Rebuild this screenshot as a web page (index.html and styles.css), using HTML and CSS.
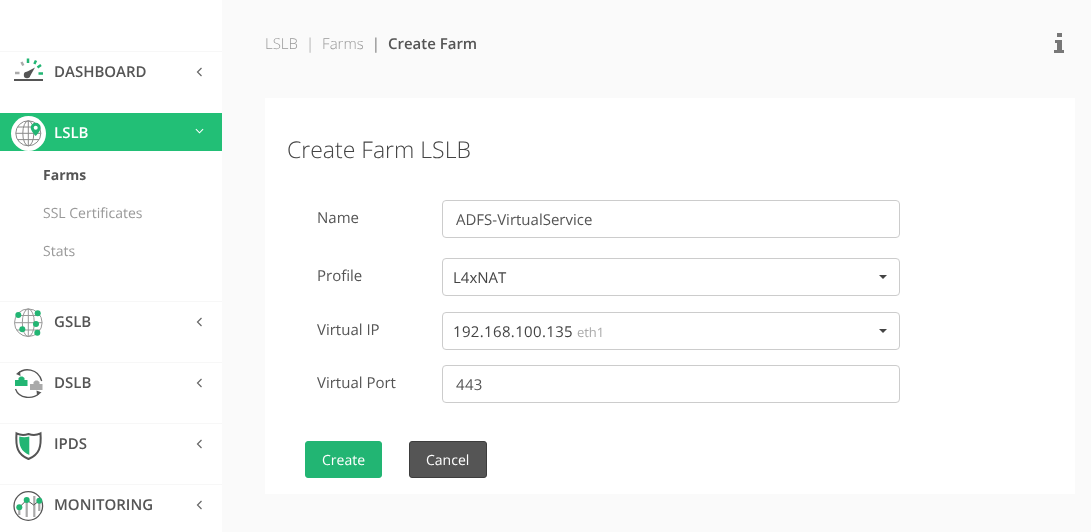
FILE: index.html
```html
<!doctype html>
<html lang="en">
<head>
    <meta charset="UTF-8">
    <title>Create Farm LSLB</title>
    <link rel="stylesheet" href="styles.css">
</head>
<body>
<div class="page">
    <div class="sidebar">
        <div class="navItem">
            <svg class="navIcon" viewBox="0 0 33 33">
                <path d="M1 23h29" stroke="#555" stroke-width="2" fill="none"/>
                <path d="M2 16h4.500M8.500 5l1.800 3.500" stroke="#aaa" stroke-width="2.500" fill="none"/>
                <path d="M15 1.500v4.500M23 3.500l-1.600 3.500M28 8l-3.500 2.500M25.500 16.500h4.500" stroke="#22b573" stroke-width="2.500" fill="none"/>
                <path d="M12.500 15.500L22 10.500 16.500 20z" fill="#555"/>
                <circle cx="14" cy="18" r="3.200" fill="#555"/>
            </svg>
            <span class="navText">DASHBOARD</span>
            <svg class="arrow" viewBox="0 0 8 10"><path d="M6 1L2 5l4 4" fill="none" stroke="#666" stroke-width="1.200"/></svg>
        </div>
        <div class="navItem active">
            <span class="iconDisc">
                <svg class="navIcon" viewBox="0 0 29 29">
                    <g fill="none" stroke="#8a8a8a" stroke-width="1">
                        <circle cx="14.300" cy="14.300" r="12.500"/>
                        <ellipse cx="14.300" cy="14.300" rx="5.500" ry="12.500"/>
                        <path d="M1.800 14.300h25M3.500 8h21.600M3.500 20.600h21.600M14.300 1.800v25"/>
                    </g>
                    <path d="M21.700 3.700a5 5 0 0 1 5 5c0 3-5 8.300-5 8.300s-5-5.300-5-8.300a5 5 0 0 1 5-5z" fill="#22b573"/>
                    <circle cx="21.700" cy="8.700" r="2" fill="#fff"/>
                </svg>
            </span>
            <span class="navText">LSLB</span>
            <svg class="arrow" viewBox="0 0 10 8"><path d="M1 2l4 4 4-4" fill="none" stroke="#fff" stroke-width="1.200"/></svg>
        </div>
        <div class="subNav">
            <div class="subItem current">Farms</div>
            <div class="subItem">SSL Certificates</div>
            <div class="subItem">Stats</div>
        </div>
        <div class="navItem">
            <svg class="navIcon" viewBox="0 0 33 33">
                <g fill="none" stroke="#999" stroke-width="1">
                    <circle cx="15.300" cy="15.700" r="13.800"/>
                    <ellipse cx="15.300" cy="15.700" rx="6" ry="13.800"/>
                    <path d="M1.500 15.700h27.600M3.500 8.500h23.600M3.500 23h23.600M15.300 2v27.500"/>
                </g>
                <g fill="#22b573">
                    <circle cx="5.300" cy="8" r="3"/>
                    <circle cx="24.700" cy="6.300" r="3"/>
                    <circle cx="23" cy="17" r="3"/>
                    <circle cx="9.300" cy="22.300" r="3"/>
                    <circle cx="24.300" cy="25.700" r="3"/>
                </g>
            </svg>
            <span class="navText">GSLB</span>
            <svg class="arrow" viewBox="0 0 8 10"><path d="M6 1L2 5l4 4" fill="none" stroke="#666" stroke-width="1.200"/></svg>
        </div>
        <div class="navItem">
            <svg class="navIcon" viewBox="0 0 33 33">
                <path d="M5 5.500C11 -0.500 25 0 28.700 13M26 25.500C20 31.500 6 31 2.500 21" fill="none" stroke="#555" stroke-width="1.300"/>
                <path d="M3 6l4-3 .5 5zM28.500 24.500l-4.500 3-.5-5z" fill="#555"/>
                <path d="M2 18v-6h3.500v-2l2-1.500h2l2 1.500v2h3v6z" fill="#22b573"/>
                <path d="M17 22v-6h3.500v-2l2-1.500h2l2 1.500v2h3v6z" fill="#aaa"/>
            </svg>
            <span class="navText">DSLB</span>
            <svg class="arrow" viewBox="0 0 8 10"><path d="M6 1L2 5l4 4" fill="none" stroke="#666" stroke-width="1.200"/></svg>
        </div>
        <div class="navItem">
            <svg class="navIcon" viewBox="0 0 33 33">
                <path d="M15.500 5c4 1.300 8 1.300 12-.6 1 13.500-1 21-12 25.600C4.500 25.400 2.500 18 3.500 4.400c4 1.900 8 1.900 12 .6z" fill="#fff" stroke="#555" stroke-width="2"/>
                <path d="M6.300 7.500c3 1 7 1 10 0V26C8 22 5.800 17 6.300 7.500z" fill="#22b573"/>
            </svg>
            <span class="navText">IPDS</span>
            <svg class="arrow" viewBox="0 0 8 10"><path d="M6 1L2 5l4 4" fill="none" stroke="#666" stroke-width="1.200"/></svg>
        </div>
        <div class="navItem">
            <svg class="navIcon" viewBox="0 0 33 33">
                <circle cx="15.300" cy="16" r="14.300" fill="none" stroke="#555" stroke-width="1.300"/>
                <path d="M6.300 17v8M13.700 10v17M21.300 6v21M26.300 11v10" stroke="#aaa" stroke-width="2.200" fill="none"/>
                <path d="M6.300 17.300L13.700 10l7 5 5.600-4.300" stroke="#555" stroke-width="1" fill="none"/>
                <g fill="#22b573">
                    <circle cx="6.300" cy="17.300" r="3"/>
                    <circle cx="13.700" cy="10" r="3"/>
                    <circle cx="26.300" cy="10.700" r="3"/>
                </g>
            </svg>
            <span class="navText">MONITORING</span>
            <svg class="arrow" viewBox="0 0 8 10"><path d="M6 1L2 5l4 4" fill="none" stroke="#666" stroke-width="1.200"/></svg>
        </div>
    </div>
    <div class="main">
        <div class="topBar">
            <div class="crumbs">
                <span>LSLB</span>
                <span class="sep">|</span>
                <span>Farms</span>
                <span class="sep dark">|</span>
                <strong>Create Farm</strong>
            </div>
            <svg class="info" viewBox="0 0 10 20"><path d="M3 0h5v4H3zM1 7h7v10h2v3H0v-3h3v-7H1z" fill="#777"/></svg>
        </div>
        <div class="card">
            <h1 class="title">Create Farm LSLB</h1>
            <div class="row first">
                <label class="rowLabel">Name</label>
                <div class="field">ADFS-VirtualService</div>
            </div>
            <div class="row">
                <label class="rowLabel">Profile</label>
                <div class="field select">L4xNAT<i class="caret"></i></div>
            </div>
            <div class="row tight">
                <label class="rowLabel">Virtual IP</label>
                <div class="field select"><span class="nums">192.168.100.135</span> <small>eth1</small><i class="caret"></i></div>
            </div>
            <div class="row tighter">
                <label class="rowLabel">Virtual Port</label>
                <div class="field"><span class="nums">443</span></div>
            </div>
            <div class="actions">
                <span class="btn green">Create</span>
                <span class="btn gray">Cancel</span>
            </div>
        </div>
    </div>
</div>
</body>
</html>
```

FILE: styles.css
```css
* {
    margin: 0;
    padding: 0;
    box-sizing: border-box;
}

html, body {
    height: 100%;
    overflow: hidden;
}

body {
    background: #fafafa;
    font-family: "Open Sans", "Liberation Sans", sans-serif;
    font-size: 15px;
    color: #555;
    text-rendering: geometricPrecision;
}

.page {
    display: flex;
    height: 532px;
    will-change: transform;
}

.sidebar {
    width: 222px;
    flex: none;
    background: #fff;
    padding-top: 51px;
    overflow: hidden;
}

.navItem {
    display: flex;
    align-items: flex-start;
    height: 61px;
    padding: 5px 18px 0 13px;
    border-top: 1px solid #f7f7f7;
    font-size: 15px;
    font-weight: 600;
    color: #555;
}

.navIcon {
    width: 33px;
    height: 33px;
    flex: none;
}

.navText {
    margin-left: 8px;
    line-height: 31px;
    flex: 1;
}

.arrow {
    width: 9px;
    height: 10px;
    margin-top: 10px;
}

.navItem.active {
    height: 38px;
    margin-top: 1px;
    padding: 3px 18px 0 11px;
    border-top: 0;
    background: #22bf76;
    color: #fff;
}

.iconDisc {
    display: flex;
    align-items: center;
    justify-content: center;
    width: 35px;
    height: 35px;
    flex: none;
    border-radius: 50%;
    background: #fff;
}

.iconDisc .navIcon {
    width: 29px;
    height: 29px;
}

.navItem.active .navText {
    margin-left: 8px;
    line-height: 34px;
}

.navItem.active .arrow {
    margin-top: 10px;
}

.subNav {
    height: 150px;
    padding-top: 6px;
}

.subItem {
    height: 38px;
    line-height: 38px;
    padding-left: 43px;
    font-size: 14px;
    color: #999;
}

.subItem.current {
    font-weight: 700;
    color: #555;
}

.main {
    flex: 1;
    padding: 0 16px 0 43px;
}

.topBar {
    display: flex;
    align-items: center;
    justify-content: space-between;
    height: 98px;
    padding-bottom: 10px;
}

.crumbs {
    display: flex;
    gap: 8px;
    font-size: 15px;
    font-weight: 300;
    color: #999;
}

.crumbs .sep.dark {
    color: #777;
    font-weight: 400;
}

.crumbs strong {
    font-weight: 600;
    color: #555;
}

.info {
    width: 10px;
    height: 20px;
    margin: 0 11px 2px 0;
}

.card {
    height: 396px;
    padding: 33px 22px 0;
    background: #fff;
}

.title {
    font-size: 23px;
    font-weight: 300;
    line-height: 37px;
    color: #444;
}

.row {
    display: flex;
    align-items: flex-start;
    margin-top: 20px;
    padding-left: 30px;
}

.row.first {
    margin-top: 32px;
}

.row.tight {
    margin-top: 16px;
}

.row.tighter {
    margin-top: 15px;
}

.rowLabel {
    width: 125px;
    line-height: 37px;
}

.field {
    position: relative;
    width: 458px;
    height: 38px;
    line-height: 38px;
    padding: 0 13px;
    border: 1px solid #ccc;
    border-radius: 4px;
    background: #fff;
    color: #555;
}

.field.select {
    padding: 0 10px;
    color: #444;
}

.nums {
    letter-spacing: .35px;
}

.field small {
    font-size: 13px;
    color: #aaa;
}

.caret {
    position: absolute;
    top: 16px;
    right: 12px;
    border-top: 4px solid #444;
    border-left: 4px solid transparent;
    border-right: 4px solid transparent;
}

.actions {
    display: flex;
    gap: 27px;
    margin-top: 38px;
    padding-left: 18px;
    font-size: 14px;
}

.btn {
    height: 37px;
    line-height: 37px;
    padding: 0 16px;
    border: 1px solid;
    border-radius: 3px;
    color: #fff;
}

.btn.green {
    width: 77px;
    background: #22b573;
    border-color: #22b573;
}

.btn.gray {
    width: 78px;
    background: #555;
    border-color: #3d3d3d;
}
```
